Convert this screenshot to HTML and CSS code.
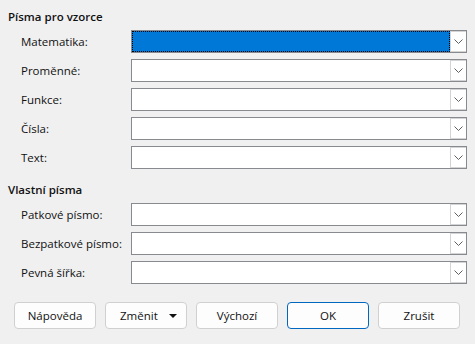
FILE: index.html
```html
<!DOCTYPE html>
<html lang="cs">
<head>
    <meta charset="UTF-8">
    <title>Písma</title>
    <link rel="stylesheet" href="styles.css">
</head>
<body>
    <div class="dialog">
        <h2 class="section-title">Písma pro vzorce</h2>
        <div class="rows">
            <label>Matematika:</label>
            <div class="combo selected"><div class="field"></div><div class="arrow"><svg width="9" height="5" viewBox="0 0 9 5"><path d="M0.5 0.5 L4.5 4.5 L8.5 0.5" fill="none" stroke="#5f5f5f" stroke-width="1"/></svg></div></div>
            <label>Proměnné:</label>
            <div class="combo"><div class="field"></div><div class="arrow"><svg width="9" height="5" viewBox="0 0 9 5"><path d="M0.5 0.5 L4.5 4.5 L8.5 0.5" fill="none" stroke="#5f5f5f" stroke-width="1"/></svg></div></div>
            <label>Funkce:</label>
            <div class="combo"><div class="field"></div><div class="arrow"><svg width="9" height="5" viewBox="0 0 9 5"><path d="M0.5 0.5 L4.5 4.5 L8.5 0.5" fill="none" stroke="#5f5f5f" stroke-width="1"/></svg></div></div>
            <label>Čísla:</label>
            <div class="combo"><div class="field"></div><div class="arrow"><svg width="9" height="5" viewBox="0 0 9 5"><path d="M0.5 0.5 L4.5 4.5 L8.5 0.5" fill="none" stroke="#5f5f5f" stroke-width="1"/></svg></div></div>
            <label>Text:</label>
            <div class="combo"><div class="field"></div><div class="arrow"><svg width="9" height="5" viewBox="0 0 9 5"><path d="M0.5 0.5 L4.5 4.5 L8.5 0.5" fill="none" stroke="#5f5f5f" stroke-width="1"/></svg></div></div>
        </div>

        <h2 class="section-title second">Vlastní písma</h2>
        <div class="rows">
            <label>Patkové písmo:</label>
            <div class="combo"><div class="field"></div><div class="arrow"><svg width="9" height="5" viewBox="0 0 9 5"><path d="M0.5 0.5 L4.5 4.5 L8.5 0.5" fill="none" stroke="#5f5f5f" stroke-width="1"/></svg></div></div>
            <label>Bezpatkové písmo:</label>
            <div class="combo"><div class="field"></div><div class="arrow"><svg width="9" height="5" viewBox="0 0 9 5"><path d="M0.5 0.5 L4.5 4.5 L8.5 0.5" fill="none" stroke="#5f5f5f" stroke-width="1"/></svg></div></div>
            <label>Pevná šířka:</label>
            <div class="combo"><div class="field"></div><div class="arrow"><svg width="9" height="5" viewBox="0 0 9 5"><path d="M0.5 0.5 L4.5 4.5 L8.5 0.5" fill="none" stroke="#5f5f5f" stroke-width="1"/></svg></div></div>
        </div>

        <div class="buttons">
            <button>Nápověda</button>
            <button class="menu-btn">Změnit <span class="caret"></span></button>
            <button>Výchozí</button>
            <button class="default">OK</button>
            <button>Zrušit</button>
        </div>
    </div>
</body>
</html>
```

FILE: styles.css
```css
body {
    margin: 0;
    background-color: #f0f0f0;
    font-family: "Open Sans", "Noto Sans", sans-serif;
    font-size: 11.5px;
    color: #111;
}
.dialog {
    padding: 9px 0 0 8px;
}
.section-title {
    margin: 0;
    font-size: 11.5px;
    font-weight: 600;
    line-height: 16px;
}
.section-title.second {
    margin-top: 13px;
}
.rows {
    display: grid;
    grid-template-columns: 110px 336px;
    grid-auto-rows: 23px;
    row-gap: 6px;
    margin-top: 5px;
    padding-left: 13px;
    align-items: center;
}
.combo {
    display: flex;
    height: 23px;
    box-sizing: border-box;
    border: 1px solid #878a8e;
    background: white;
}
.field {
    flex: 1;
}
.combo.selected .field {
    background-color: #0078d7;
    outline: 1px dotted #000;
    outline-offset: -1px;
}
.arrow {
    width: 16px;
    box-sizing: border-box;
    border: 1px solid #d4d4d4;
    border-right: none;
    display: flex;
    align-items: center;
    justify-content: center;
    background: white;
}
.buttons {
    display: flex;
    gap: 9px;
    margin-top: 18px;
    padding-left: 6px;
}
button {
    width: 82px;
    height: 27px;
    border: 1px solid #d0d0d0;
    border-radius: 4px;
    background: #fdfdfd;
    font-family: inherit;
    font-size: 11.5px;
    color: #111;
    padding: 0;
}
button.default {
    border-color: #0067c0;
}
.menu-btn {
    display: flex;
    align-items: center;
    padding-left: 14px;
    gap: 11px;
}
.caret {
    width: 0;
    height: 0;
    border-left: 4px solid transparent;
    border-right: 4px solid transparent;
    border-top: 4px solid #111;
}
```
